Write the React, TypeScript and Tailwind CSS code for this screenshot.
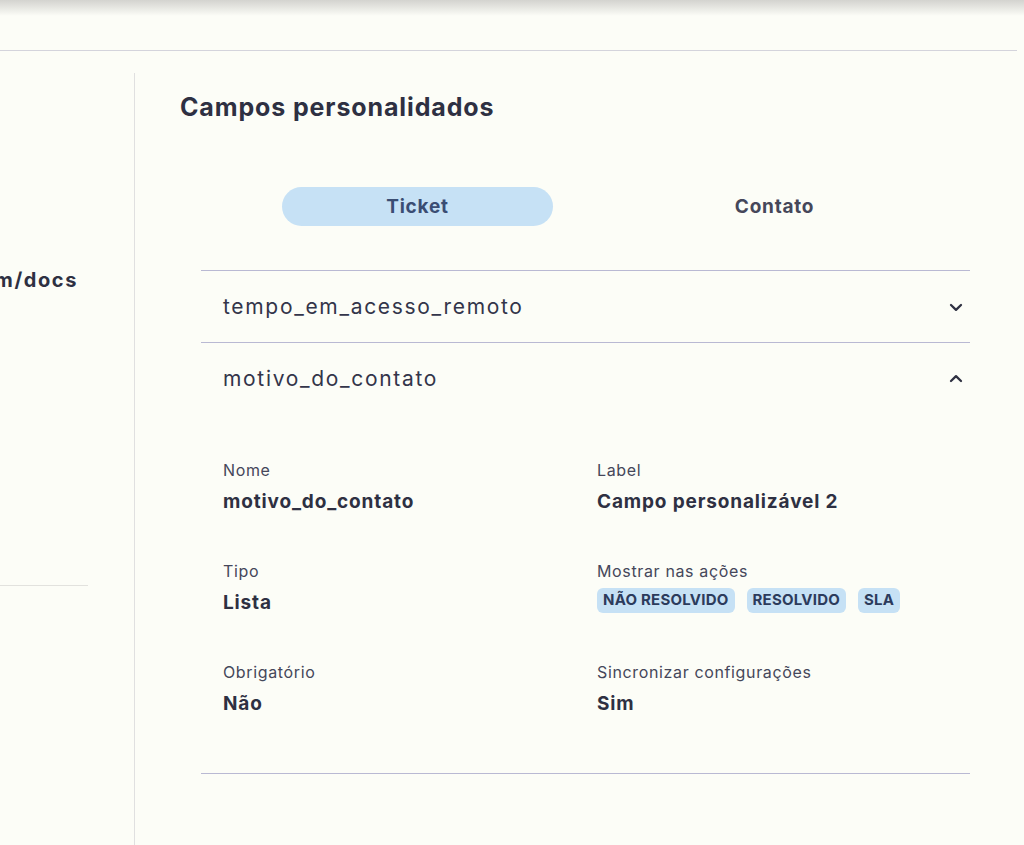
import React from "react";

const Chevron = ({ up }: { up?: boolean }) => (
  <svg width="14" height="14" viewBox="0 0 14 14" fill="none" className={up ? "rotate-180" : ""}>
    <path d="M2 5l5 4.8L12 5" stroke="#2f3142" strokeWidth="2.3" strokeLinecap="round" strokeLinejoin="round" />
  </svg>
);

const Field = ({ label, value, children }: { label: string; value?: string; children?: React.ReactNode }) => (
  <div className="flex flex-col">
    <div className="text-[16px] leading-[20px] tracking-[0.04em] text-[#45475a]">{label}</div>
    {value ? (
      <div className="mt-[11px] text-[19px] leading-[22px] tracking-[0.045em] font-bold text-[#2e3042]">{value}</div>
    ) : (
      children
    )}
  </div>
);

const Tag = ({ t }: { t: string }) => (
  <span className="rounded-md bg-[#c6e1f5] px-[6px] h-[25px] flex items-center text-[15px] font-bold text-[#2c3b5c] tracking-[0.015em]">
    {t}
  </span>
);

export default function App() {
  return (
    <div className="min-h-screen bg-[#fcfdf7] text-[#2e3042]" style={{ fontFamily: "Inter, 'Noto Sans', sans-serif" }}>
      <div className="h-[50px]">
        <div className="h-[16px] bg-gradient-to-b from-[#d3d3cf] to-[#fcfdf7]" />
      </div>
      <div className="w-[1017px] h-[1px] bg-[#d4d4dc]" />
      <div className="flex">
        <aside className="w-[135px] mt-[22px] border-r border-[#e0e0e0] h-[772px] shrink-0">
          <div className="w-[78px] overflow-hidden flex justify-end mt-[195px]">
            <span className="whitespace-nowrap text-[20px] font-bold leading-[24px] tracking-[0.08em] text-[#2e3042]">suporte.com/docs</span>
          </div>
          <div className="w-[88px] h-px bg-[#e2e2de] mt-[293px]" />
        </aside>
        <main className="pl-[45px] pt-[40px] flex-1">
          <h1 className="text-[25px] leading-[32px] font-bold tracking-[0.035em] text-[#2e3042]">Campos personalidados</h1>
          <div className="mt-[64px] ml-[102px] flex">
            <button className="w-[271px] h-[39px] pt-[2px] rounded-full bg-[#c6e1f5] text-[19px] font-bold tracking-[0.04em] text-[#3a4d73]">Ticket</button>
            <button className="w-[271px] h-[39px] pt-[2px] ml-[86px] rounded-full text-[19px] font-bold tracking-[0.04em] text-[#45475a]">Contato</button>
          </div>
          <div className="mt-[44px] ml-[21px] w-[769px]">
            <div className="border-t border-[#b9b9d3] h-[72px] flex items-center justify-between pl-[22px] pr-[7px]">
              <span className="text-[21px] tracking-[0.08em] text-[#33354a]">tempo_em_acesso_remoto</span>
              <Chevron />
            </div>
            <div className="border-t border-b border-[#b9b9d3]">
              <div className="h-[72px] flex items-center justify-between pl-[22px] pr-[7px]">
                <span className="text-[21px] tracking-[0.08em] text-[#33354a]">motivo_do_contato</span>
                <Chevron up />
              </div>
              <div className="grid grid-cols-[374px_1fr] pl-[22px] pt-[45px] pb-[58px] gap-y-[48px]">
                <Field label="Nome" value="motivo_do_contato" />
                <Field label="Label" value="Campo personalizável 2" />
                <Field label="Tipo" value="Lista" />
                <Field label="Mostrar nas ações">
                  <div className="mt-[7px] flex gap-[12px]">
                    <Tag t="NÃO RESOLVIDO" />
                    <Tag t="RESOLVIDO" />
                    <Tag t="SLA" />
                  </div>
                </Field>
                <Field label="Obrigatório" value="Não" />
                <Field label="Sincronizar configurações" value="Sim" />
              </div>
            </div>
          </div>
        </main>
      </div>
    </div>
  );
}
